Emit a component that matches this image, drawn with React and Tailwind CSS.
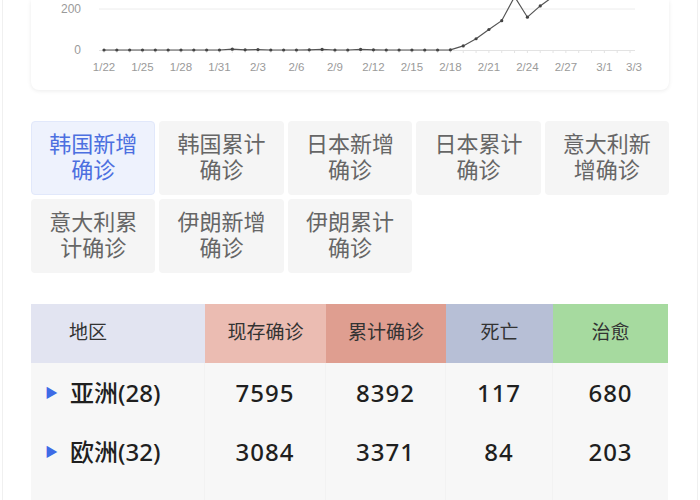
import React from 'react';

const font = { fontFamily: '"Liberation Sans", "Noto Sans CJK SC", sans-serif' };
const numFont = { fontFamily: '"Noto Sans", "Noto Sans CJK SC", sans-serif' };

// daily values 1/22 .. 3/3 (42 days)
const series = [
  0, 0, 0, 0, 0, 0, 0, 0, 0, 0, 4, 1, 2, 0, 0, 0, 1, 3, 0, 0, 3, 1, 0, 0, 0, 0, 0, 1,
  20, 55, 100, 143, 260, 160, 215, 260, 420, 480, 570, 600, 590, 800,
];
const xLabels = ['1/22', '1/25', '1/28', '1/31', '2/3', '2/6', '2/9', '2/12', '2/15', '2/18', '2/21', '2/24', '2/27', '3/1'];

const tabs = [
  '韩国新增确诊', '韩国累计确诊', '日本新增确诊', '日本累计确诊', '意大利新增确诊',
  '意大利累计确诊', '伊朗新增确诊', '伊朗累计确诊',
];

const rows = [
  { name: '亚洲(28)', now: 7595, total: 8392, dead: 117, cured: 680 },
  { name: '欧洲(32)', now: 3084, total: 3371, dead: 84, cured: 203 },
];

function Chart() {
  // card starts at page x=31
  const x = i => 104 + 12.83 * i - 31;
  const y = v => 50 - v * 0.205;
  const pts = series.map((v, i) => `${x(i).toFixed(1)},${y(v).toFixed(1)}`).join(' ');
  return (
    <svg width="637" height="90" className="block">
      <line x1="68" y1="9" x2="604" y2="9" stroke="#ececec" strokeWidth="1" />
      <line x1="68" y1="50.5" x2="604" y2="50.5" stroke="#e3e3e3" strokeWidth="1" />
      {series.map((_, i) => (
        <line key={i} x1={x(i)} y1="50.5" x2={x(i)} y2="53" stroke="#e3e3e3" strokeWidth="1" />
      ))}
      <text x="50" y="13" textAnchor="end" fontSize="12" fill="#9a9a9a" style={font}>200</text>
      <text x="50" y="54" textAnchor="end" fontSize="12" fill="#9a9a9a" style={font}>0</text>
      {xLabels.map((l, k) => (
        <text key={l} x={x(k * 3)} y="71" textAnchor="middle" fontSize="11.5" fill="#9a9a9a" style={font}>{l}</text>
      ))}
      <text x="603" y="71" textAnchor="middle" fontSize="11.5" fill="#9a9a9a" style={font}>3/3</text>
      <polyline points={pts} fill="none" stroke="#555" strokeWidth="1.2" />
      {series.map((v, i) => (
        <circle key={i} cx={x(i)} cy={y(v)} r="1.6" fill="#444" />
      ))}
    </svg>
  );
}

export default function App() {
  return (
    <div className="w-[700px] h-[500px] overflow-hidden bg-white px-[2px]" style={font}>
      <div className="h-full border-x border-[#f0f0f0] px-[28px]">
        <div className="h-[90px] bg-white rounded-b-lg shadow-[0_1px_4px_rgba(0,0,0,0.08)] overflow-hidden">
          <Chart />
        </div>

        <div className="mt-[31px] grid grid-cols-5 gap-[4px]">
          {tabs.map((t, i) => (
            <div
              key={t}
              className={
                i === 0
                  ? 'h-[74px] flex items-center justify-center text-center px-[15px] rounded-[4px] bg-[#eef2fd] border border-[#e1e8fb] text-[#4c6fe0] text-[22px] leading-[26px]'
                  : 'h-[74px] flex items-center justify-center text-center px-[15px] rounded-[4px] bg-[#f5f5f5] text-[#666] text-[22px] leading-[26px]'
              }
            >
              {t}
            </div>
          ))}
        </div>

        <div className="mt-[31px] grid grid-cols-[174px_121px_120px_107px_115px] text-[#333]">
          <div className="h-[59px] flex items-center pl-[38px] bg-[#e2e4f1] text-[19px]">地区</div>
          <div className="h-[59px] flex items-center justify-center bg-[#ebbcb2] text-[19px]">现存确诊</div>
          <div className="h-[59px] flex items-center justify-center bg-[#df9e90] text-[19px]">累计确诊</div>
          <div className="h-[59px] flex items-center justify-center bg-[#b7bfd6] text-[19px]">死亡</div>
          <div className="h-[59px] flex items-center justify-center bg-[#a6da9f] text-[19px]">治愈</div>
          {rows.map(r => (
            <React.Fragment key={r.name}>
              <div className="h-[59px] flex items-center bg-[#f7f7f7] border-r border-[#f2f2f2] pl-[14px] text-[24px] font-medium text-[#1f1f1f]" style={numFont}>
                <span className="text-[#3e6be6] text-[13px] mr-[12px]">▶</span>
                {r.name}
              </div>
              <div className="h-[59px] flex items-center justify-center bg-[#f7f7f7] border-r border-[#f2f2f2] text-[24px] font-medium tracking-[1px] text-[#1f1f1f]" style={numFont}>{r.now}</div>
              <div className="h-[59px] flex items-center justify-center bg-[#f7f7f7] border-r border-[#f2f2f2] text-[24px] font-medium tracking-[1px] text-[#1f1f1f]" style={numFont}>{r.total}</div>
              <div className="h-[59px] flex items-center justify-center bg-[#f7f7f7] border-r border-[#f2f2f2] text-[24px] font-medium tracking-[1px] text-[#1f1f1f]" style={numFont}>{r.dead}</div>
              <div className="h-[59px] flex items-center justify-center bg-[#f7f7f7] text-[24px] font-medium tracking-[1px] text-[#1f1f1f]" style={numFont}>{r.cured}</div>
            </React.Fragment>
          ))}
          <div className="h-[59px] bg-[#f7f7f7] border-r border-[#f2f2f2]" />
          <div className="h-[59px] bg-[#f7f7f7] border-r border-[#f2f2f2]" />
          <div className="h-[59px] bg-[#f7f7f7] border-r border-[#f2f2f2]" />
          <div className="h-[59px] bg-[#f7f7f7] border-r border-[#f2f2f2]" />
          <div className="h-[59px] bg-[#f7f7f7]" />
        </div>
      </div>
    </div>
  );
}
